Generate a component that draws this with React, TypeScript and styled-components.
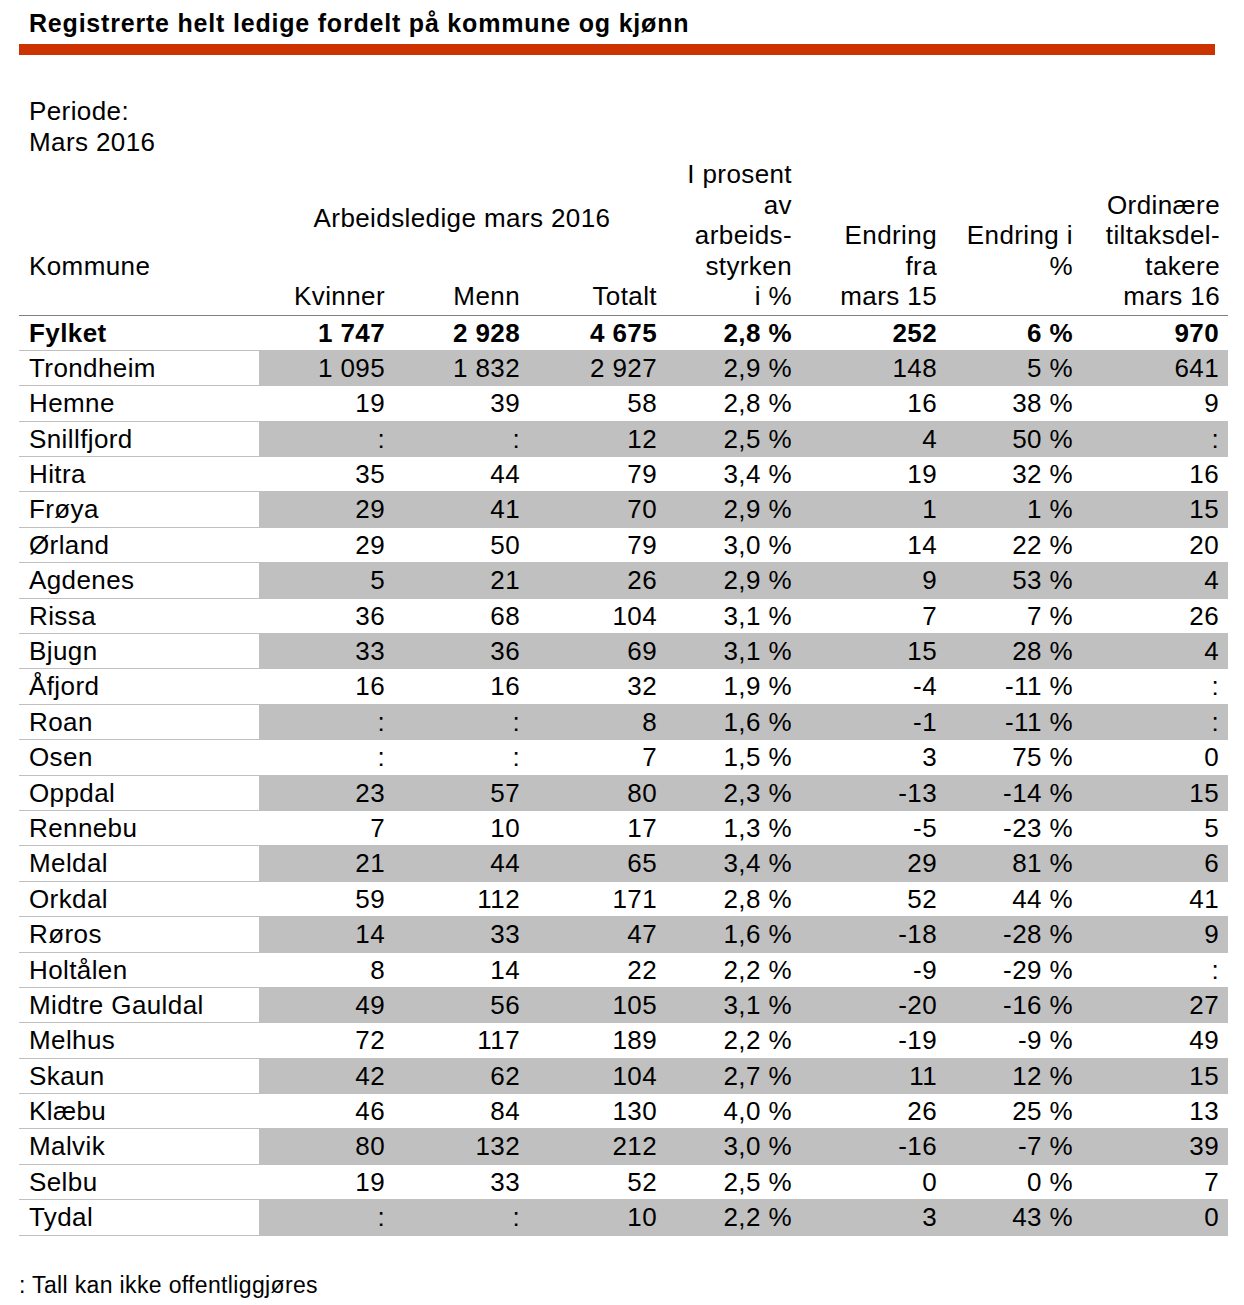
import React from "react";
import styled, { createGlobalStyle } from "styled-components";

const Global = createGlobalStyle`
  html, body { margin: 0; padding: 0; background: #fff; }
  body { font-family: "Liberation Sans", Arial, sans-serif; color: #000; }
`;

const Page = styled.div`
  width: 1244px;
  padding: 9px 16px 0 19px;
  box-sizing: border-box;
`;

const Title = styled.h1`
  margin: 0 0 0 10px;
  font-size: 25px;
  line-height: 29px;
  font-weight: 700;
  letter-spacing: 0.8px;
  white-space: nowrap;
`;

const Bar = styled.div`
  margin-top: 6px;
  width: 1196px;
  height: 11px;
  background: #cc3300;
`;

const Period = styled.div`
  margin: 41px 0 0 10px;
  font-size: 26px;
  letter-spacing: 0.4px;
  line-height: 31px;
`;

const cols = "240px 134px 135px 137px 135px 145px 136px 147px";

const Table = styled.div`
  width: 1209px;
  font-size: 26px;
  letter-spacing: 0.4px;
`;

const Head = styled.div`
  display: grid;
  grid-template-columns: ${cols};
  grid-template-rows: auto 30.5px;
  line-height: 30.5px;
  padding-top: 1px;
  padding-bottom: 3px;
  border-bottom: 1px solid #808080;
`;

const HeadCell = styled.div<{ $col: string; $left?: boolean; $lift?: number }>`
  grid-column: ${(p) => p.$col};
  grid-row: 1 / 3;
  align-self: end;
  text-align: ${(p) => (p.$left ? "left" : "right")};
  padding: 0 ${(p) => (p.$left ? "0" : "8px")} ${(p) => p.$lift ?? 0}px ${(p) => (p.$left ? "10px" : "0")};
  white-space: nowrap;
`;

const GroupCell = styled.div`
  grid-column: 2 / 5;
  grid-row: 1;
  align-self: end;
  text-align: center;
  padding-bottom: 47.5px;
`;

const SubCell = styled.div<{ $col: number }>`
  grid-column: ${(p) => p.$col};
  grid-row: 2;
  text-align: right;
  padding-right: 8px;
`;

const Row = styled.div<{ $bold?: boolean }>`
  display: grid;
  grid-template-columns: ${cols};
  height: 35.4px;
  line-height: 34.4px;
  border-bottom: 1px solid #c0c0c0;
  box-sizing: border-box;
  font-weight: ${(p) => (p.$bold ? 700 : 400)};
`;

const NameCell = styled.div`
  padding-left: 10px;
  white-space: nowrap;
`;

const NumCell = styled.div<{ $shade?: boolean; $last?: boolean }>`
  text-align: right;
  padding-right: ${(p) => (p.$last ? "9px" : "8px")};
  background: ${(p) => (p.$shade ? "#c0c0c0" : "transparent")};
  white-space: nowrap;
`;

const Note = styled.div`
  margin-top: 35px;
  font-size: 23px;
  letter-spacing: 0.35px;
  line-height: 28px;
`;

const S = "\u00a0";

type R = [string, string, string, string, string, string, string, string];

const rows: R[] = [
  ["Fylket", `1${S}747`, `2${S}928`, `4${S}675`, `2,8${S}%`, "252", `6${S}%`, "970"],
  ["Trondheim", `1${S}095`, `1${S}832`, `2${S}927`, `2,9${S}%`, "148", `5${S}%`, "641"],
  ["Hemne", "19", "39", "58", `2,8${S}%`, "16", `38${S}%`, "9"],
  ["Snillfjord", ":", ":", "12", `2,5${S}%`, "4", `50${S}%`, ":"],
  ["Hitra", "35", "44", "79", `3,4${S}%`, "19", `32${S}%`, "16"],
  ["Frøya", "29", "41", "70", `2,9${S}%`, "1", `1${S}%`, "15"],
  ["Ørland", "29", "50", "79", `3,0${S}%`, "14", `22${S}%`, "20"],
  ["Agdenes", "5", "21", "26", `2,9${S}%`, "9", `53${S}%`, "4"],
  ["Rissa", "36", "68", "104", `3,1${S}%`, "7", `7${S}%`, "26"],
  ["Bjugn", "33", "36", "69", `3,1${S}%`, "15", `28${S}%`, "4"],
  ["Åfjord", "16", "16", "32", `1,9${S}%`, "-4", `-11${S}%`, ":"],
  ["Roan", ":", ":", "8", `1,6${S}%`, "-1", `-11${S}%`, ":"],
  ["Osen", ":", ":", "7", `1,5${S}%`, "3", `75${S}%`, "0"],
  ["Oppdal", "23", "57", "80", `2,3${S}%`, "-13", `-14${S}%`, "15"],
  ["Rennebu", "7", "10", "17", `1,3${S}%`, "-5", `-23${S}%`, "5"],
  ["Meldal", "21", "44", "65", `3,4${S}%`, "29", `81${S}%`, "6"],
  ["Orkdal", "59", "112", "171", `2,8${S}%`, "52", `44${S}%`, "41"],
  ["Røros", "14", "33", "47", `1,6${S}%`, "-18", `-28${S}%`, "9"],
  ["Holtålen", "8", "14", "22", `2,2${S}%`, "-9", `-29${S}%`, ":"],
  ["Midtre Gauldal", "49", "56", "105", `3,1${S}%`, "-20", `-16${S}%`, "27"],
  ["Melhus", "72", "117", "189", `2,2${S}%`, "-19", `-9${S}%`, "49"],
  ["Skaun", "42", "62", "104", `2,7${S}%`, "11", `12${S}%`, "15"],
  ["Klæbu", "46", "84", "130", `4,0${S}%`, "26", `25${S}%`, "13"],
  ["Malvik", "80", "132", "212", `3,0${S}%`, "-16", `-7${S}%`, "39"],
  ["Selbu", "19", "33", "52", `2,5${S}%`, "0", `0${S}%`, "7"],
  ["Tydal", ":", ":", "10", `2,2${S}%`, "3", `43${S}%`, "0"],
];

const Lines: React.FC<{ lines: string[] }> = ({ lines }) => (
  <>
    {lines.map((l, i) => (
      <div key={i}>{l}</div>
    ))}
  </>
);

export default function App() {
  return (
    <>
      <Global />
      <Page>
        <Title>Registrerte helt ledige fordelt på kommune og kjønn</Title>
        <Bar />
        <Period>
          <div>Periode:</div>
          <div>Mars 2016</div>
        </Period>
        <Table>
          <Head>
            <HeadCell $col="1" $left $lift={30.5}>
              Kommune
            </HeadCell>
            <GroupCell>Arbeidsledige mars 2016</GroupCell>
            <SubCell $col={2}>Kvinner</SubCell>
            <SubCell $col={3}>Menn</SubCell>
            <SubCell $col={4}>Totalt</SubCell>
            <HeadCell $col="5">
              <Lines lines={["I prosent", "av", "arbeids-", "styrken", "i %"]} />
            </HeadCell>
            <HeadCell $col="6">
              <Lines lines={["Endring", "fra", "mars 15"]} />
            </HeadCell>
            <HeadCell $col="7" $lift={30.5}>
              <Lines lines={["Endring i", "%"]} />
            </HeadCell>
            <HeadCell $col="8">
              <Lines lines={["Ordinære", "tiltaksdel-", "takere", "mars 16"]} />
            </HeadCell>
          </Head>
          {rows.map((r, i) => {
            const shade = i % 2 === 1;
            return (
              <Row key={r[0]} $bold={i === 0}>
                <NameCell>{r[0]}</NameCell>
                {r.slice(1).map((v, j) => (
                  <NumCell key={j} $shade={shade} $last={j === 6}>
                    {v}
                  </NumCell>
                ))}
              </Row>
            );
          })}
        </Table>
        <Note>: Tall kan ikke offentliggjøres</Note>
      </Page>
    </>
  );
}
